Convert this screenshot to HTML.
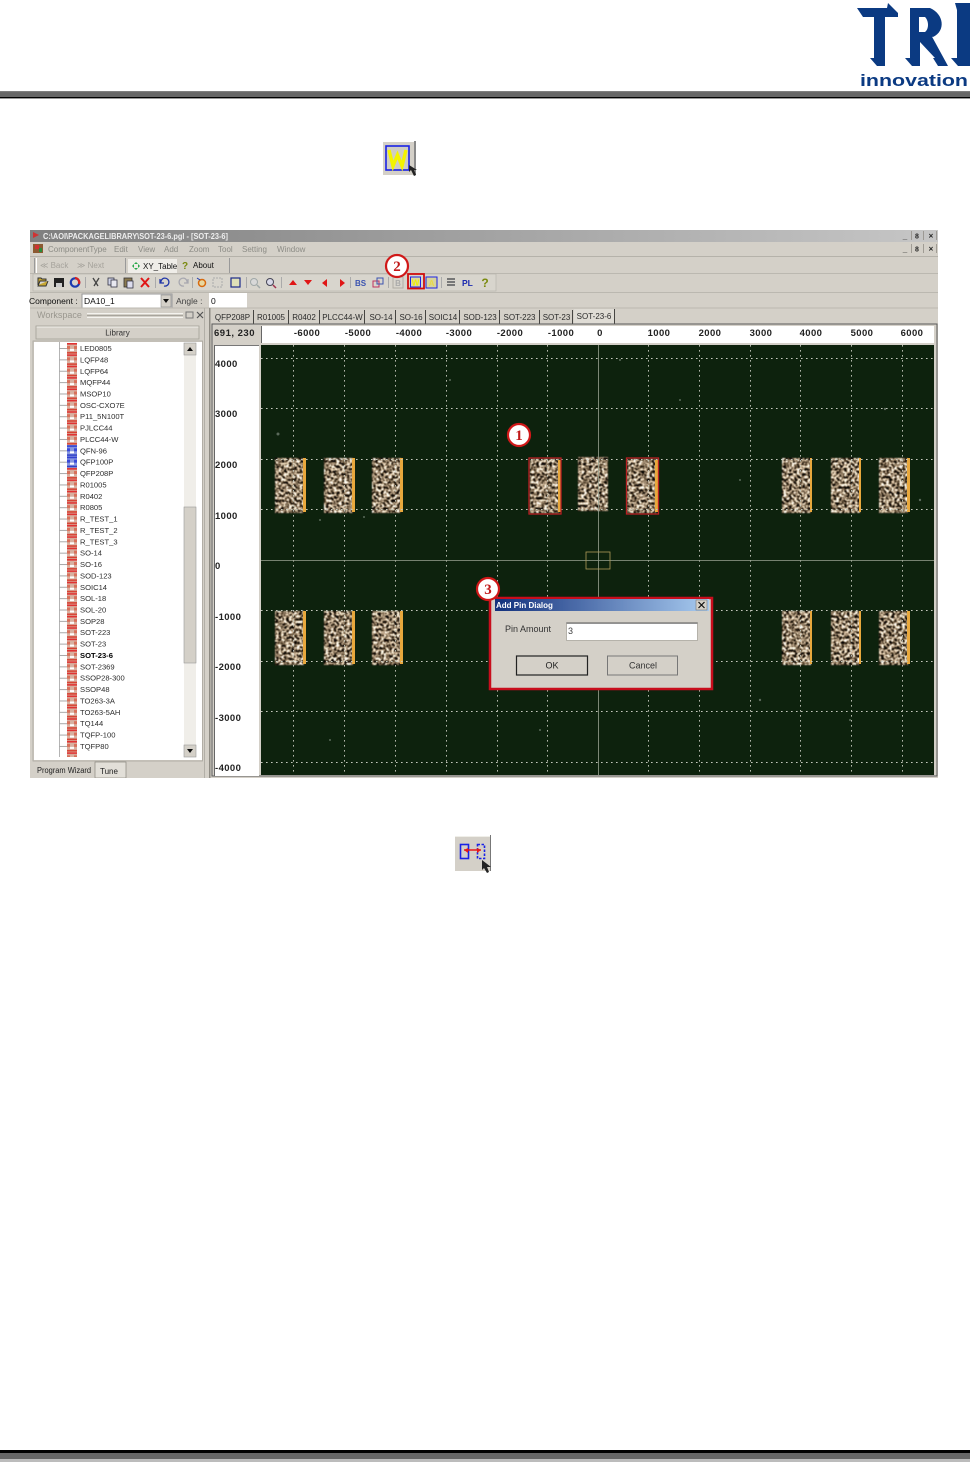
<!DOCTYPE html>
<html><head><meta charset="utf-8"><title>Add Pin Dialog</title>
<style>
html,body{margin:0;padding:0;background:#fff;width:970px;height:1462px;overflow:hidden}
svg{display:block;font-family:"Liberation Sans",sans-serif}
</style></head><body>
<svg width="970" height="1462" viewBox="0 0 970 1462" xmlns="http://www.w3.org/2000/svg">
<defs>
<filter id="soft" x="0" y="0" width="100%" height="100%"><feGaussianBlur stdDeviation="0.38"/></filter>
<filter id="speck" x="-5%" y="-5%" width="110%" height="110%" color-interpolation-filters="sRGB">
<feTurbulence type="fractalNoise" baseFrequency="0.38" numOctaves="2" seed="7" result="n"/>
<feColorMatrix in="n" type="matrix" values="3.4 0 0 0 -1.12  3.2 0 0 0 -1.1  3 0 0 0 -1.1  0 0 0 0 1" result="c"/>
<feComposite in="c" in2="SourceAlpha" operator="in"/>
<feGaussianBlur stdDeviation="0.45"/>
</filter>
<linearGradient id="tb" x1="0" x2="1" y1="0" y2="0"><stop offset="0" stop-color="#7f7f7f"/><stop offset="1" stop-color="#c6c6c6"/></linearGradient>
<linearGradient id="dt" x1="0" x2="1" y1="0" y2="0"><stop offset="0" stop-color="#12307c"/><stop offset="1" stop-color="#a8cbf0"/></linearGradient>
<linearGradient id="hd" x1="0" x2="0" y1="0" y2="1"><stop offset="0" stop-color="#8a8a8a"/><stop offset=".25" stop-color="#666"/><stop offset="1" stop-color="#666"/></linearGradient>
<pattern id="brick" x="67" y="343" width="10" height="11.37" patternUnits="userSpaceOnUse">
<rect width="10" height="11.37" fill="#d8b0a0"/><rect width="10" height="1.6" y="0" fill="#e03030"/><rect width="3" height="3" y="3" fill="#d8705a"/><rect x="7" width="3" height="3" y="3" fill="#d8705a"/><rect x="3" y="6" width="4" height="2" fill="#fff"/><rect width="10" height="1.6" y="9" fill="#d84030"/>
</pattern>
<pattern id="brickb" x="67" y="343" width="10" height="11.37" patternUnits="userSpaceOnUse">
<rect width="10" height="11.37" fill="#8898e0"/><rect width="10" height="1.6" y="0" fill="#3040d0"/><rect width="3" height="3" y="3" fill="#3848d8"/><rect x="7" width="3" height="3" y="3" fill="#3848d8"/><rect x="3" y="6" width="4" height="2" fill="#fff"/><rect width="10" height="1.6" y="9" fill="#3040c8"/>
</pattern>
<pattern id="tick" x="59" y="348" width="8" height="11.37" patternUnits="userSpaceOnUse"><rect width="8" height="1" fill="#a8a8a8"/></pattern>
</defs>

<!-- page header -->
<rect x="0" y="91" width="970" height="6" fill="url(#hd)"/>
<rect x="0" y="97" width="970" height="1.4" fill="#000"/>
<!-- logo -->
<g fill="#0b3a82">
<path d="M857 8H887L888 3L898 13V17H885V66H877L870 58H874V17H863Z"/>
<path d="M910 8H919V66H912L905 58H910Z"/>
<path d="M919 8H930C944 14 946 31 933 37L919 33V32H925C929 29 929 21 925 17H919Z"/>
<path d="M913 33H930L948 66H938L933 58H935L920 42V66H919V42Z"/>
<path d="M955 3L970 3V66H958L951 58H957V10Z"/>
<text x="860" y="86" font-size="17" font-weight="700" textLength="108" lengthAdjust="spacingAndGlyphs">innovation</text>
</g>

<!-- W icon -->
<g>
<rect x="383" y="142" width="32" height="33" fill="#d4d0c8"/>
<rect x="414" y="141" width="2" height="34" fill="#8a8a8a"/>
<rect x="386" y="146" width="23" height="24" fill="#cfcdc4" stroke="#1a22e6" stroke-width="1.6"/>
<path d="M389 150L393 166L397.500 155L402 166L406 150" fill="none" stroke="#f4f400" stroke-width="3.400"/>
<path d="M409 165V172L411 170L414 176L416 175L414 170L417 170Z" fill="#222"/>
</g>

<!-- App window -->
<g filter="url(#soft)">
<rect x="30" y="230" width="908" height="548" fill="#d4d0c8"/>
<rect x="30" y="230" width="908" height="12" fill="url(#tb)"/>
<path d="M33 232l6 3-6 3z" fill="#d03030"/>
<text x="43" y="239" font-size="8" font-weight="700" fill="#eee" textLength="185" lengthAdjust="spacingAndGlyphs">C:\AOI\PACKAGELIBRARY\SOT-23-6.pgl - [SOT-23-6]</text>
<g font-size="8" font-weight="700" fill="#222" text-anchor="middle">
<text x="905" y="239">_</text><text x="917" y="238.500" font-size="7">8</text><text x="931" y="238.500">×</text>
<text x="905" y="252">_</text><text x="917" y="251.500" font-size="7">8</text><text x="931" y="251.500">×</text>
</g>
<g stroke="#8a877f" stroke-width=".7"><path d="M911.500 231v9M923.500 231v9M936.500 231v9M911.500 244v9M923.500 244v9M936.500 244v9"/></g>
<!-- menu -->
<rect x="33" y="244" width="10" height="9" fill="#8c5a30"/><rect x="35" y="245" width="4" height="4" fill="#d03030"/><rect x="39" y="248" width="3" height="4" fill="#2a8a3a"/>
<g font-size="8" fill="#8c8c86">
<text x="48" y="252">ComponentType</text><text x="114" y="252">Edit</text><text x="138" y="252">View</text><text x="164" y="252">Add</text><text x="189" y="252">Zoom</text><text x="218" y="252">Tool</text><text x="242" y="252">Setting</text><text x="277" y="252">Window</text>
</g>
<rect x="30" y="256" width="908" height="1" fill="#b5b2aa"/>
<!-- nav row -->
<rect x="34" y="258" width="1" height="15" fill="#999"/><rect x="36" y="258" width="1" height="15" fill="#fff"/>
<g font-size="8" fill="#a5a29b"><text x="40" y="268">≪ Back</text><text x="77" y="268">≫ Next</text></g>
<rect x="125" y="258" width="1" height="15" fill="#999"/>
<rect x="128" y="259" width="49" height="14" fill="#efede8"/>
<path d="M136 262l2 2h-4zM136 270l2-2h-4zM132 266l2-2v4zM140 266l-2-2v4z" fill="#2aa84a"/>
<text x="143" y="269" font-size="8" fill="#111">XY_Table</text>
<text x="182" y="269" font-size="10" font-weight="700" fill="#7a8a10">?</text>
<text x="193" y="268" font-size="8" fill="#111">About</text>
<rect x="229" y="258" width="1" height="15" fill="#999"/>
<rect x="30" y="273" width="908" height="1" fill="#bbb8b0"/>
<!-- toolbar -->
<rect x="33" y="274" width="463" height="17" fill="#d8d5cd" stroke="#b5b2aa" stroke-width=".6"/>
<path d="M38 285v-7h3l1 1h4v2h-6l-2 5h8l2-5" fill="#c8a830" stroke="#333" stroke-width="1"/>
<rect x="54" y="278" width="10" height="9" fill="#222"/><rect x="56" y="283" width="6" height="4" fill="#ccc"/>
<circle cx="75" cy="282.500" r="4.200" fill="none" stroke="#1a3bb0" stroke-width="2.200"/><path d="M75 278a4.500 4.500 0 0 1 4 6" fill="none" stroke="#d82020" stroke-width="2.200"/>
<rect x="85" y="277" width="1" height="11" fill="#aaa"/>
<path d="M93 278l5 8M99 278l-5 8" stroke="#444" stroke-width="1.300" fill="none"/>
<rect x="108" y="278" width="6" height="7" fill="#cfd3e8" stroke="#334" stroke-width=".8"/><rect x="111" y="280" width="6" height="7" fill="#e8e8f0" stroke="#334" stroke-width=".8"/>
<rect x="124" y="278" width="8" height="9" fill="#8a7a50" stroke="#333" stroke-width=".8"/><rect x="127" y="281" width="6" height="7" fill="#dde" stroke="#334" stroke-width=".8"/>
<path d="M141 278l8 9M149 278l-8 9" stroke="#e01818" stroke-width="2" fill="none"/>
<rect x="155" y="277" width="1" height="11" fill="#aaa"/>
<path d="M161 283a4 4 0 1 1 3 3M160 279v4h4" fill="none" stroke="#2238a8" stroke-width="1.300"/>
<path d="M187 283a4 4 0 1 0-3 3M188 279v4h-4" fill="none" stroke="#a8a8b0" stroke-width="1.300"/>
<rect x="192" y="277" width="1" height="11" fill="#aaa"/>
<circle cx="202" cy="283" r="3.500" fill="#e8d8a0" stroke="#d86a10" stroke-width="1.500"/><path d="M197 278l3 2" stroke="#2238a8"/>
<rect x="213" y="278" width="9" height="9" fill="none" stroke="#aaa" stroke-dasharray="2 1"/>
<rect x="231" y="278" width="9" height="9" fill="#dfe0b8" stroke="#1a2a8a" stroke-width="1.200"/>
<rect x="246" y="277" width="1" height="11" fill="#aaa"/>
<circle cx="254" cy="282" r="3.500" fill="#d8d8d8" stroke="#a0a8a8"/><path d="M257 285l3 3" stroke="#a0a8a8" stroke-width="1.500"/>
<circle cx="270" cy="282" r="3.500" fill="#d8d8e8" stroke="#445"/><path d="M273 285l3 3" stroke="#a03050" stroke-width="1.500"/>
<rect x="281" y="277" width="1" height="11" fill="#aaa"/>
<g fill="#e01818"><path d="M289 285l4-5 4 5z"/><path d="M304 280l4 5 4-5z"/><path d="M327 279l-5 4 5 4z"/><path d="M340 279l5 4-5 4z"/></g>
<rect x="350" y="277" width="1" height="11" fill="#aaa"/>
<text x="355" y="286" font-size="8" font-weight="700" fill="#3a52b0">BS</text>
<rect x="373" y="281" width="6" height="6" fill="none" stroke="#c03060"/><rect x="377" y="278" width="6" height="6" fill="none" stroke="#3a52b0"/>
<rect x="388" y="277" width="1" height="11" fill="#aaa"/>
<rect x="393" y="277" width="10" height="11" fill="#d8d5cd" stroke="#b0ada5"/>
<text x="398" y="286" font-size="8" font-weight="700" text-anchor="middle" fill="#aaa">B</text>
<rect x="408" y="274" width="16" height="14.500" fill="none" stroke="#d01010" stroke-width="1.800"/>
<rect x="410.500" y="277" width="10" height="10" fill="#ddd9a0" stroke="#1a22e6"/>
<text x="415.500" y="285.500" font-size="8" font-weight="700" text-anchor="middle" fill="#f0f000">W</text>
<rect x="426" y="277" width="11" height="11" fill="#d8d49c" stroke="#1a22e6"/>
<text x="431.500" y="286" font-size="8" font-weight="700" text-anchor="middle" fill="#e8d848">A</text>
<rect x="441" y="277" width="1" height="11" fill="#aaa"/>
<g fill="#777"><rect x="447" y="278" width="8" height="2"/><rect x="447" y="281" width="8" height="2"/><rect x="447" y="284" width="8" height="2"/></g>
<text x="462" y="286" font-size="8.500" font-weight="700" fill="#1a2ab0">PL</text>
<text x="485" y="287" font-size="12" font-weight="700" text-anchor="middle" fill="#7a8a10">?</text>
<rect x="30" y="292" width="908" height="1" fill="#bbb8b0"/>
<!-- component row -->
<text x="29" y="304" font-size="8.500" fill="#111">Component :</text>
<rect x="82" y="294" width="90" height="14" fill="#fff" stroke="#999"/>
<text x="84" y="304" font-size="8.500" fill="#111">DA10_1</text>
<rect x="161" y="295" width="10" height="12" fill="#d4d0c8" stroke="#888" stroke-width=".6"/><path d="M163 299h6l-3 4z" fill="#111"/>
<text x="176" y="304" font-size="8.500" fill="#444">Angle :</text>
<rect x="209" y="293" width="38" height="15" fill="#fff"/>
<text x="211" y="304" font-size="8.500" fill="#111">0</text>
<rect x="30" y="307.500" width="908" height="1" fill="#bbb8b0"/>
<!-- workspace -->
<text x="37" y="318" font-size="9" fill="#9a978f">Workspace</text>
<rect x="87" y="313" width="96" height="1" fill="#f4f3ef"/><rect x="87" y="315" width="96" height="1" fill="#a8a59d"/><rect x="87" y="317" width="96" height="1" fill="#f4f3ef"/>
<rect x="186" y="312" width="7" height="6" fill="none" stroke="#777"/><path d="M197 312l6 6M203 312l-6 6" stroke="#555" stroke-width="1.200"/>
<!-- library header -->
<rect x="36" y="326" width="163" height="13" fill="#d4d0c8" stroke="#a3a097" stroke-width=".8"/>
<rect x="36.500" y="326.500" width="162" height="1" fill="#f2f1ec"/>
<text x="117.500" y="335.500" font-size="8" text-anchor="middle" fill="#333">Library</text>
<!-- tree panel -->
<rect x="34" y="342" width="168" height="418" fill="#fff"/>
<rect x="33" y="341" width="169.500" height="420" fill="none" stroke="#a9a69e" stroke-width=".8"/>
<rect x="59" y="342" width="1" height="415" fill="#b4b4b4"/>
<rect x="59" y="348" width="8" height="409" fill="url(#tick)"/>
<rect x="67" y="343" width="10" height="414" fill="url(#brick)"/>
<rect x="67" y="445" width="10" height="22.700" fill="url(#brickb)"/>
<g font-size="7.600" fill="#2e2e2e">
<text x="80" y="351">LED0805</text><text x="80" y="362.400">LQFP48</text><text x="80" y="373.800">LQFP64</text><text x="80" y="385.100">MQFP44</text><text x="80" y="396.500">MSOP10</text><text x="80" y="407.900">OSC-CXO7E</text><text x="80" y="419.200">P11_5N100T</text><text x="80" y="430.600">PJLCC44</text><text x="80" y="442">PLCC44-W</text><text x="80" y="453.300">QFN-96</text><text x="80" y="464.700">QFP100P</text><text x="80" y="476.100">QFP208P</text><text x="80" y="487.400">R01005</text><text x="80" y="498.800">R0402</text><text x="80" y="510.200">R0805</text><text x="80" y="521.600">R_TEST_1</text><text x="80" y="532.900">R_TEST_2</text><text x="80" y="544.300">R_TEST_3</text><text x="80" y="555.700">SO-14</text><text x="80" y="567">SO-16</text><text x="80" y="578.400">SOD-123</text><text x="80" y="589.800">SOIC14</text><text x="80" y="601.100">SOL-18</text><text x="80" y="612.500">SOL-20</text><text x="80" y="623.900">SOP28</text><text x="80" y="635.200">SOT-223</text><text x="80" y="646.600">SOT-23</text><text x="80" y="658" font-weight="700" fill="#000">SOT-23-6</text><text x="80" y="669.300">SOT-2369</text><text x="80" y="680.700">SSOP28-300</text><text x="80" y="692.100">SSOP48</text><text x="80" y="703.400">TO263-3A</text><text x="80" y="714.800">TO263-5AH</text><text x="80" y="726.200">TQ144</text><text x="80" y="737.500">TQFP-100</text><text x="80" y="748.900">TQFP80</text>
</g>
<rect x="34" y="757" width="168" height="3" fill="#fff"/>
<!-- scrollbar -->
<rect x="184" y="343" width="12" height="414" fill="#f0eee9"/>
<rect x="184" y="507" width="12" height="156" fill="#d4d0c8" stroke="#999" stroke-width=".6"/>
<rect x="184" y="343" width="12" height="12" fill="#d4d0c8" stroke="#999" stroke-width=".6"/><path d="M187 351h6l-3-4z" fill="#111"/>
<rect x="184" y="745" width="12" height="12" fill="#d4d0c8" stroke="#999" stroke-width=".6"/><path d="M187 749h6l-3 4z" fill="#111"/>
<!-- bottom tabs -->
<text x="37" y="773" font-size="8" fill="#222" textLength="54" lengthAdjust="spacingAndGlyphs">Program Wizard</text>
<rect x="95" y="762" width="31" height="16" fill="#e2dfd8" stroke="#8a877f" stroke-width=".7"/>
<text x="100" y="774" font-size="8" fill="#222">Tune</text>
<rect x="204" y="308" width="1" height="470" fill="#b2afa7"/>
<rect x="209" y="308" width="1.500" height="470" fill="#8e8b83"/>
<!-- tabs -->
<g stroke="#222" stroke-width=".8">
<path d="M253.500 310v14M288.500 310v14M319.500 310v14M364.500 310v14M395.500 310v14M425.500 310v14M459.500 310v14M499.500 310v14M539.500 310v14M572.500 310v14M614.500 309v15"/>
</g>
<rect x="574" y="309" width="40" height="15" fill="#dfdcd5"/>
<g font-size="8" fill="#2a2a2a" text-anchor="middle">
<text x="232.500" y="320">QFP208P</text><text x="271" y="320">R01005</text><text x="304" y="320">R0402</text><text x="342.500" y="320">PLCC44-W</text><text x="381" y="320">SO-14</text><text x="411" y="320">SO-16</text><text x="443" y="320">SOIC14</text><text x="480" y="320">SOD-123</text><text x="519.500" y="320">SOT-223</text><text x="556.500" y="320">SOT-23</text><text x="594" y="319">SOT-23-6</text>
</g>
<!-- ruler frame -->
<rect x="212" y="324" width="725" height="452" fill="#d4d0c8" stroke="#5a5a5a" stroke-width="1"/>
<rect x="214" y="326" width="43" height="16" fill="#d4d0c8"/>
<text x="214" y="336" font-size="9.500" font-weight="700" fill="#222" letter-spacing=".5">691, 230</text>
<rect x="262" y="326" width="672" height="17" fill="#fff"/>
<rect x="261" y="326" width="1" height="17" fill="#666"/>
<g font-size="9.500" font-weight="700" fill="#222" text-anchor="middle" letter-spacing=".4">
<text x="307" y="336">-6000</text><text x="358" y="336">-5000</text><text x="409" y="336">-4000</text><text x="459" y="336">-3000</text><text x="510" y="336">-2000</text><text x="561" y="336">-1000</text><text x="600" y="336">0</text><text x="659" y="336">1000</text><text x="710" y="336">2000</text><text x="761" y="336">3000</text><text x="811" y="336">4000</text><text x="862" y="336">5000</text><text x="912" y="336">6000</text>
</g>
<rect x="214" y="345" width="45" height="431" fill="#fff"/>
<rect x="214" y="345" width="45" height="1" fill="#777"/>
<rect x="214" y="345" width="1" height="431" fill="#666"/>
<g font-size="9.500" font-weight="700" fill="#222" letter-spacing=".4">
<text x="215" y="367">4000</text><text x="215" y="417">3000</text><text x="215" y="468">2000</text><text x="215" y="519">1000</text><text x="215" y="569">0</text><text x="215" y="620">-1000</text><text x="215" y="670">-2000</text><text x="215" y="721">-3000</text><text x="215" y="771">-4000</text>
</g>
<!-- canvas -->
<rect x="261" y="345" width="673" height="430" fill="#10200f"/>
<g fill="#5a6a5a">
<circle cx="278" cy="434" r="1.500"/><circle cx="320" cy="520" r="1"/><circle cx="364" cy="517" r="1"/><circle cx="680" cy="400" r="1"/><circle cx="885" cy="409" r="1.200"/><circle cx="905" cy="470" r=".9"/><circle cx="920" cy="500" r="1.200"/><circle cx="740" cy="480" r="1"/><circle cx="450" cy="380" r="1"/><circle cx="700" cy="600" r="1"/><circle cx="760" cy="700" r="1.200"/><circle cx="330" cy="740" r="1"/><circle cx="540" cy="730" r="1"/><circle cx="850" cy="720" r="1"/><circle cx="620" cy="360" r="1"/>
</g>
<!-- pads -->
<g filter="url(#speck)" fill="#000">
<rect x="275" y="458" width="29" height="55"/><rect x="324" y="458" width="29" height="55"/><rect x="372" y="458" width="29" height="55"/>
<rect x="530" y="459" width="29" height="54"/><rect x="578" y="457" width="30" height="54"/><rect x="627" y="459" width="29" height="54"/>
<rect x="782" y="458" width="29" height="55"/><rect x="831" y="458" width="29" height="55"/><rect x="879" y="458" width="29" height="55"/>
<rect x="275" y="611" width="29" height="54"/><rect x="324" y="611" width="29" height="54"/><rect x="372" y="611" width="29" height="54"/>
<rect x="782" y="611" width="29" height="54"/><rect x="831" y="611" width="29" height="54"/><rect x="879" y="611" width="29" height="54"/>
</g>
<g fill="#e8a83c">
<rect x="303" y="458" width="3" height="54"/><rect x="352" y="458" width="3" height="54"/><rect x="400" y="458" width="3" height="54"/>
<rect x="558" y="460" width="3" height="52"/><rect x="655" y="460" width="3" height="52"/>
<rect x="810" y="458" width="2" height="54"/><rect x="859" y="458" width="2" height="54"/><rect x="907" y="458" width="3" height="54"/>
<rect x="303" y="611" width="3" height="53"/><rect x="352" y="611" width="3" height="53"/><rect x="400" y="611" width="3" height="53"/>
<rect x="810" y="611" width="2" height="53"/><rect x="859" y="611" width="2" height="53"/><rect x="907" y="611" width="3" height="53"/>
</g>
<g stroke="#c4c8bc" stroke-width=".9" stroke-dasharray="1.600 3.400" fill="none">
<path d="M293.500 345V775M344.500 345V775M395.500 345V775M446.500 345V775M497.500 345V775M547.500 345V775M648.500 345V775M699.500 345V775M750.500 345V775M800.500 345V775M851.500 345V775M902.500 345V775"/>
<path d="M261 358.500H934M261 408.500H934M261 459.500H934M261 509.500H934M261 610.500H934M261 661.500H934M261 711.500H934M261 762.500H934"/>
</g>
<path d="M598.500 345V775M261 560.500H934" stroke="#98a290" stroke-width=".8"/>
<rect x="586" y="552" width="24" height="17" fill="none" stroke="#b09a58" stroke-width=".8"/>
<rect x="529" y="458" width="32" height="56" fill="none" stroke="#b82020" stroke-width="1.300"/>
<rect x="626.500" y="458" width="32" height="56" fill="none" stroke="#b82020" stroke-width="1.300"/>
<!-- dialog -->
<rect x="490" y="598" width="222" height="91" fill="#d4d0c8" stroke="#c8101c" stroke-width="2.500"/>
<rect x="495" y="599" width="214" height="12" fill="url(#dt)"/>
<text x="496" y="608" font-size="8" font-weight="700" fill="#fff">Add Pin Dialog</text>
<rect x="696" y="600" width="11" height="10" fill="#d4d0c8" stroke="#777" stroke-width=".6"/><path d="M698.500 602l6 6M704.500 602l-6 6" stroke="#111" stroke-width="1.200"/>
<text x="505" y="632" font-size="9" fill="#333">Pin Amount</text>
<rect x="566.500" y="622.500" width="131" height="18" fill="#fff" stroke="#b5b2aa" stroke-width="1"/>
<rect x="566.500" y="622.500" width="131" height="1.300" fill="#777"/>
<text x="568" y="634" font-size="9" fill="#444">3</text>
<rect x="516.500" y="656" width="71" height="19" fill="#d4d0c8" stroke="#222" stroke-width="1.200"/>
<text x="552" y="668.500" font-size="9" text-anchor="middle" fill="#222">OK</text>
<rect x="607.500" y="656" width="70" height="19" fill="#d4d0c8" stroke="#777" stroke-width="1"/>
<text x="643" y="668.500" font-size="9" text-anchor="middle" fill="#333">Cancel</text>
</g>

<!-- callouts -->
<g font-family="'Liberation Serif',serif" font-weight="700" font-size="15" fill="#c01818" text-anchor="middle" stroke-width="2.200">
<circle cx="397" cy="266" r="11" fill="#fff" stroke="#d01818"/><text x="397" y="271">2</text>
<circle cx="519" cy="435" r="11" fill="#fff" stroke="#d01818"/><text x="519" y="440">1</text>
<circle cx="488" cy="589" r="11" fill="#fff" stroke="#d01818"/><text x="488" y="594">3</text>
</g>

<!-- second icon -->
<g>
<rect x="455" y="836" width="36" height="35" fill="#d4d0c8"/>
<rect x="455" y="836" width="36" height="1" fill="#f0efe9"/>
<rect x="490" y="835" width="1" height="36" fill="#777"/>
<rect x="460.500" y="844.500" width="8" height="14" fill="none" stroke="#1a22e6" stroke-width="1.600"/>
<rect x="477.500" y="844.500" width="7" height="14" fill="none" stroke="#1a22e6" stroke-width="1.600" stroke-dasharray="2.500 1.500"/>
<path d="M464 850H481" stroke="#e81818" stroke-width="1.400"/>
<path d="M464 850l4-2v5zM481 850l-4-2v5z" fill="#e81818"/>
<path d="M482 860V870L484 868L487 873L489 872L487 867L491 867Z" fill="#222"/>
</g>

<!-- footer -->
<rect x="0" y="1450" width="970" height="3" fill="#000"/>
<rect x="0" y="1453" width="970" height="6" fill="#666"/>
<rect x="0" y="1459" width="970" height="3" fill="#bcbcbc"/>
</svg>
</body></html>
